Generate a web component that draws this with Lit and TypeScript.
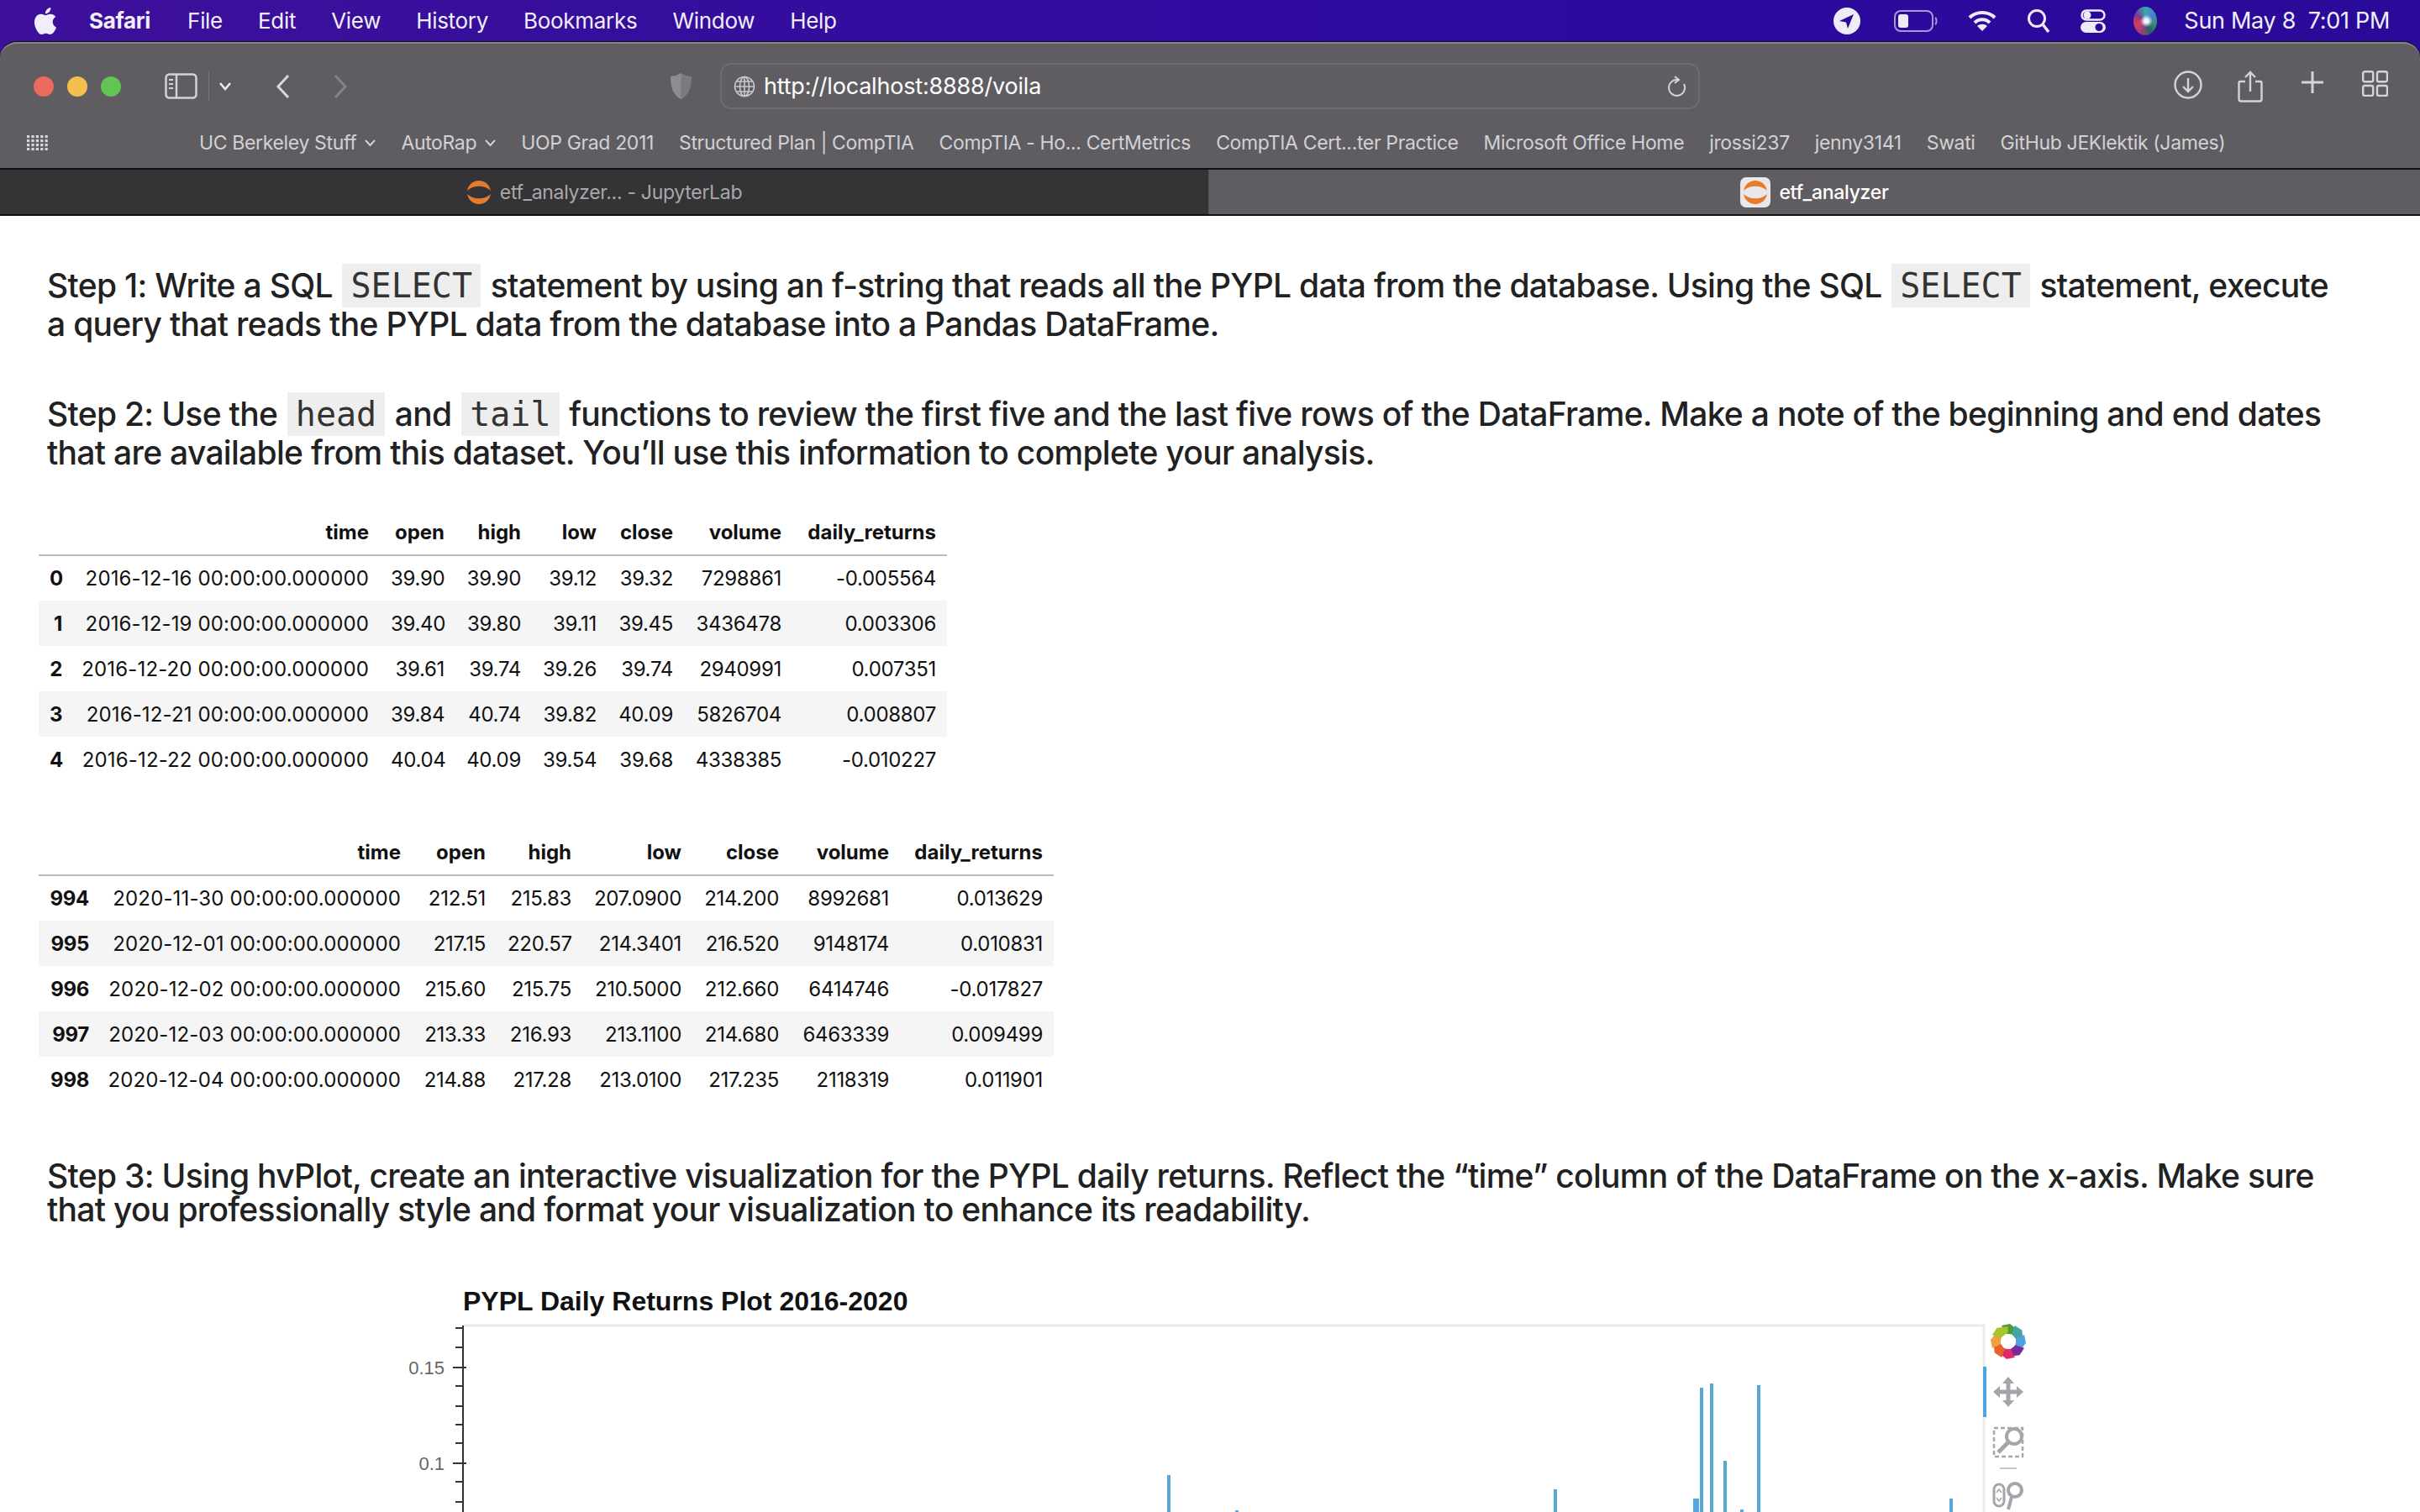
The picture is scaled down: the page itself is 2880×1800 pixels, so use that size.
import { LitElement, html, css, svg } from "lit";
import { customElement } from "lit/decorators.js";

const T1 = {
  cols: [41, 365, 90, 91, 90, 91, 129, 184],
  head: ["", "time", "open", "high", "low", "close", "volume", "daily_returns"],
  rows: [
    ["0", "2016-12-16 00:00:00.000000", "39.90", "39.90", "39.12", "39.32", "7298861", "-0.005564"],
    ["1", "2016-12-19 00:00:00.000000", "39.40", "39.80", "39.11", "39.45", "3436478", "0.003306"],
    ["2", "2016-12-20 00:00:00.000000", "39.61", "39.74", "39.26", "39.74", "2940991", "0.007351"],
    ["3", "2016-12-21 00:00:00.000000", "39.84", "40.74", "39.82", "40.09", "5826704", "0.008807"],
    ["4", "2016-12-22 00:00:00.000000", "40.04", "40.09", "39.54", "39.68", "4338385", "-0.010227"],
  ],
};
const T2 = {
  cols: [73, 371, 101, 102, 131, 116, 131, 183],
  head: T1.head,
  rows: [
    ["994", "2020-11-30 00:00:00.000000", "212.51", "215.83", "207.0900", "214.200", "8992681", "0.013629"],
    ["995", "2020-12-01 00:00:00.000000", "217.15", "220.57", "214.3401", "216.520", "9148174", "0.010831"],
    ["996", "2020-12-02 00:00:00.000000", "215.60", "215.75", "210.5000", "212.660", "6414746", "-0.017827"],
    ["997", "2020-12-03 00:00:00.000000", "213.33", "216.93", "213.1100", "214.680", "6463339", "0.009499"],
    ["998", "2020-12-04 00:00:00.000000", "214.88", "217.28", "213.0100", "217.235", "2118319", "0.011901"],
  ],
};
const MENU = ["File", "Edit", "View", "History", "Bookmarks", "Window", "Help"];
const BOOKMARKS: [string, boolean][] = [
  ["UC Berkeley Stuff", true], ["AutoRap", true], ["UOP Grad 2011", false],
  ["Structured Plan | CompTIA", false], ["CompTIA - Ho... CertMetrics", false],
  ["CompTIA Cert...ter Practice", false], ["Microsoft Office Home", false],
  ["jrossi237", false], ["jenny3141", false], ["Swati", false], ["GitHub JEKlektik (James)", false],
];
const BARS = [[1391, 1755], [1472, 1797], [1851, 1772], [2017, 1783], [2020, 1783], [2025, 1651], [2037, 1646], [2053, 1738], [2073, 1796], [2093, 1648], [2322, 1783]];
const MINOR = [1580, 1603, 1649, 1673, 1695, 1717, 1763, 1787];
const PETALS = ["#4f9a3f", "#45a5a5", "#4aa3df", "#7a2b9a", "#e02a6f", "#e8622a", "#f0a040", "#a6c52f"];

const jupyter = svg`<path d="M1 16C4 0 26 0 29 16C22 9 8 9 1 16Z" fill="#e87a2c"/><path d="M1 20C4 36 26 36 29 20C22 27 8 27 1 20Z" fill="#e87a2c"/>`;

@customElement("app-root")
export class AppRoot extends LitElement {
  static styles = css`
    :host { display: block; }
    .screen { width: 2880px; height: 1800px; overflow: hidden; background: #fff; display: flex; flex-direction: column; font-family: Inter, "Liberation Sans", sans-serif; }
    .top { background: linear-gradient(90deg, #3d109a 0%, #330d9e 35%, #2d0aa0 60%, #2a0a98 100%); }
    .menubar { height: 49px; display: flex; align-items: center; color: #f0eef8; font-size: 26px; letter-spacing: -0.3px; }
    .apple { margin-left: 38px; width: 32px; height: 36px; }
    .app { margin-left: 36px; font-weight: 700; }
    .menus { display: flex; gap: 42px; margin-left: 44px; }
    .status { margin-left: auto; display: flex; align-items: center; padding-right: 36px; }
    .status svg { display: block; }
    .st-loc { margin-right: 40px; }
    .st-bat { margin-right: 36px; }
    .st-wifi { margin-right: 36px; }
    .st-search { margin-right: 36px; }
    .st-cc { margin-right: 33px; }
    .siri { width: 28px; height: 34px; border-radius: 50%; margin-right: 32px; background: radial-gradient(circle at 55% 50%, #f2f4ff 0 10%, transparent 32%), conic-gradient(#3aa7b0, #4b7fd0, #3c8f7a, #2b5f6a, #b03a7a, #d0405a, #7a3a8a, #3aa7b0); }
    .clock { font-size: 27px; white-space: pre; }
    .window { border-radius: 20px 20px 0 0; overflow: hidden; background: #5f5d62; border-top: 1px solid #111; box-shadow: inset 0 2px 0 #87858a; }
    .row1 { height: 105px; display: flex; align-items: center; }
    .lights { display: flex; gap: 16px; margin-left: 40px; }
    .light { width: 24px; height: 24px; border-radius: 50%; }
    .red { background: #ed6a5e; }
    .yellow { background: #f5bf4f; }
    .green { background: #61c554; }
    .sidebar { margin-left: 52px; }
    .divider { width: 1px; height: 36px; background: #77757a; margin-left: 13px; }
    .chev { margin-left: 12px; }
    .back { margin-left: 53px; }
    .fwd { margin-left: 52px; }
    .shield { margin-left: 383px; }
    .url { margin-left: 33px; width: 1166px; height: 55px; box-sizing: border-box; border: 2px solid #6e6c71; border-radius: 13px; display: flex; align-items: center; padding: 0 14px; color: #fff; font-size: 27px; letter-spacing: -0.2px; }
    .url span { margin-left: 10px; }
    .reload { margin-left: auto; }
    .tools { margin-left: auto; display: flex; padding-right: 17px; }
    .tool { width: 74px; display: flex; justify-content: center; }
    .row2 { height: 30px; padding-bottom: 15px; display: flex; align-items: center; color: #d2d1d3; font-size: 23px; letter-spacing: -0.35px; }
    .grid-ic { margin-left: 32px; }
    .marks { display: flex; gap: 30px; margin-left: 180px; }
    .mark { display: flex; align-items: center; gap: 10px; white-space: nowrap; }
    .tabs { display: flex; height: 53px; border-top: 2px solid #111; border-bottom: 2px solid #111; }
    .tab { display: flex; align-items: center; justify-content: center; gap: 10px; font-size: 23px; letter-spacing: -0.3px; height: 53px; }
    .tab-off { width: 1438px; background: #343335; color: #a9a8aa; border-right: 1px solid #57565a; }
    .tab-on { flex: 1; color: #fff; font-weight: 500; background: #5f5d62; }
    .fav { width: 36px; height: 36px; background: #e8e8e8; border-radius: 7px; display: flex; }
    .main { padding: 60px 0 0 46px; color: #212121; }
    p { margin: 0 0 0 10px; font-size: 39px; font-weight: 500; line-height: 46px; letter-spacing: -0.7px; white-space: nowrap; }
    p + p { margin-top: 61px; }
    p.tight { line-height: 40px; margin-top: 68px; }
    code { font-family: "DejaVu Sans Mono", monospace; font-size: 40px; font-weight: 400; letter-spacing: 0; background: #eee; padding: 3px 10px; margin: 0 2px; color: #333; }
    table { border-collapse: collapse; table-layout: fixed; font-size: 24px; letter-spacing: -0.3px; color: #111; }
    .t1 { margin-top: 44px; }
    .t2 { margin-top: 56px; }
    th, td { padding: 0 13px; height: 54px; text-align: right; white-space: nowrap; box-sizing: border-box; font-weight: 400; }
    th.b, thead th { font-weight: 700; }
    thead th { border-bottom: 2px solid #bbb; height: 55px; vertical-align: middle; letter-spacing: 0; }
    td.date { letter-spacing: 0.15px; padding-left: 0; }
    tbody tr:nth-child(even) { background: #f5f5f5; }
    .chart { display: block; margin-top: 41px; flex: none; }
    .title { font: 700 32px "Liberation Sans", sans-serif; fill: #111; }
    .tick { font: 22px "Liberation Sans", sans-serif; fill: #666; }
  `;

  private table(t: typeof T1, cls: string) {
    const width = t.cols.reduce((a, b) => a + b, 0);
    return html`<table class=${cls} style="width:${width}px">
      <colgroup>${t.cols.map((w) => html`<col style="width:${w}px" />`)}</colgroup>
      <thead><tr>${t.head.map((h) => html`<th>${h}</th>`)}</tr></thead>
      <tbody>${t.rows.map((r) => html`<tr>${r.map((c, i) => (i === 0 ? html`<th class="b">${c}</th>` : html`<td class=${i === 1 ? "date" : ""}>${c}</td>`))}</tr>`)}</tbody>
    </table>`;
  }

  private chart() {
    const y = (v: number) => v - 1500;
    return html`<svg class="chart" width="2880" height="300" viewBox="0 0 2880 300">
      <text class="title" x="551" y="59">PYPL Daily Returns Plot 2016-2020</text>
      <path d="M551 77H2361V300" fill="none" stroke="#eaeaea" stroke-width="3"/>
      <path d="M551 77V300" stroke="#333" stroke-width="2"/>
      ${MINOR.map((m) => svg`<path d="M542 ${y(m)}H552" stroke="#333" stroke-width="2"/>`)}
      <path d="M539 127H555M539 241H555" stroke="#333" stroke-width="2"/>
      <text class="tick" x="529" y="135" text-anchor="end">0.15</text>
      <text class="tick" x="529" y="249" text-anchor="end">0.1</text>
      ${BARS.map(([x, t]) => svg`<rect x=${x - 2} y=${y(t)} width="4" height=${300 - y(t)} fill="#57a7dd"/>`)}
      <rect x="2360" y="126" width="4" height="60" fill="#4ea5e0"/>
      <g transform="translate(2390 96)">
        ${PETALS.map((c, i) => svg`<path transform="rotate(${i * 45})" d="M-8 -19L2 -21L12 -13L8 -8L-3 -9Z" fill=${c}/>`)}
        <circle r="9" fill="#fff"/>
      </g>
      <g transform="translate(2390 156)" fill="#a2a6aa">
        <path d="M0 -18L7 -10H2.5V-2.5H10V-7L18 0L10 7V2.5H2.5V10H7L0 18L-7 10H-2.5V2.5H-10V7L-18 0L-10 -7V-2.5H-2.5V-10H-7Z"/>
      </g>
      <g fill="none" stroke="#a2a6aa">
        <rect x="2373" y="199" width="34" height="34" stroke-width="2.5" stroke-dasharray="5 3"/>
        <circle cx="2397" cy="209" r="9" stroke-width="4" fill="#fff"/>
        <path d="M2390 216L2378 228" stroke-width="5"/>
        <path d="M2380 247H2400" stroke="#c8c8c8" stroke-width="2"/>
        <rect x="2373" y="266" width="12" height="26" rx="6" stroke-width="3"/>
        <path d="M2376 276L2379 272L2382 276M2376 282L2379 286L2382 282" stroke-width="1.5"/>
        <circle cx="2398" cy="273" r="8" stroke-width="4"/>
        <path d="M2394 281L2390 296" stroke-width="4"/>
      </g>
    </svg>`;
  }

  render() {
    return html`<div class="screen">
      <div class="top">
        <div class="menubar">
          <svg class="apple" viewBox="0 0 24 24" fill="#f0eef8"><path d="M12.152 6.896c-.948 0-2.415-1.078-3.96-1.04-2.04.027-3.91 1.183-4.961 3.014-2.117 3.675-.546 9.103 1.519 12.09 1.013 1.454 2.208 3.09 3.792 3.039 1.52-.065 2.09-.987 3.935-.987 1.831 0 2.35.987 3.96.948 1.637-.026 2.676-1.48 3.676-2.948 1.156-1.688 1.636-3.325 1.662-3.415-.039-.013-3.182-1.221-3.22-4.857-.026-3.04 2.48-4.494 2.597-4.559-1.429-2.09-3.623-2.324-4.39-2.376-2-.156-3.675 1.09-4.61 1.09zM15.53 3.83c.843-1.012 1.4-2.427 1.245-3.83-1.207.052-2.662.805-3.532 1.818-.78.896-1.454 2.338-1.273 3.714 1.338.104 2.715-.688 3.559-1.701"/></svg>
          <span class="app">Safari</span>
          <div class="menus">${MENU.map((m) => html`<span>${m}</span>`)}</div>
          <div class="status">
            <svg class="st-loc" width="32" height="32" viewBox="0 0 32 32"><circle cx="16" cy="16" r="16" fill="#ecebf6"/><path d="M24 8L7 16L15 17.5L17 25Z" fill="#2b0a98"/></svg>
            <svg class="st-bat" width="52" height="26" viewBox="0 0 52 26" fill="none"><rect x="1" y="1" width="45" height="24" rx="7" stroke="#a49ad8" stroke-width="2"/><rect x="5" y="5" width="12" height="16" rx="3" fill="#ecebf6"/><path d="M49 9C51 10 51 16 49 17" stroke="#a49ad8" stroke-width="2"/></svg>
            <svg class="st-wifi" width="34" height="26" viewBox="0 0 34 26" fill="none" stroke="#ecebf6" stroke-width="4"><path d="M2 9C10 1 24 1 32 9"/><path d="M8 15C13 10 21 10 26 15"/><path d="M17 25L11 19C14 16 20 16 23 19Z" fill="#ecebf6" stroke="none"/></svg>
            <svg class="st-search" width="28" height="30" viewBox="0 0 28 30" fill="none" stroke="#ecebf6" stroke-width="3"><circle cx="12" cy="12" r="9.5"/><path d="M19 19L26 28" stroke-width="3.5"/></svg>
            <svg class="st-cc" width="30" height="28" viewBox="0 0 30 28"><rect x="1.5" y="1.5" width="27" height="11" rx="5.5" fill="none" stroke="#ecebf6" stroke-width="2.5"/><circle cx="8" cy="7" r="4.5" fill="#ecebf6"/><rect y="15" width="30" height="13" rx="6.5" fill="#ecebf6"/><circle cx="22" cy="21.5" r="4.5" fill="#2b0a98"/></svg>
            <div class="siri"></div>
            <span class="clock">Sun May 8  7:01 PM</span>
          </div>
        </div>
        <div class="window">
          <div class="row1">
            <div class="lights"><div class="light red"></div><div class="light yellow"></div><div class="light green"></div></div>
            <svg class="sidebar" width="39" height="31" viewBox="0 0 39 31" fill="none" stroke="#d4d3d5" stroke-width="2.5"><rect x="1.5" y="1.5" width="36" height="28" rx="4"/><path d="M14 2V29"/><path d="M5 8H10M5 13H10M5 18H10" stroke-width="2"/></svg>
            <div class="divider"></div>
            <svg class="chev" width="14" height="10" viewBox="0 0 14 10" fill="none" stroke="#eee" stroke-width="2.5"><path d="M1 1L7 8L13 1"/></svg>
            <svg class="back" width="17" height="28" viewBox="0 0 17 28" fill="none" stroke="#d8d7d9" stroke-width="3"><path d="M15 1L3 14L15 27"/></svg>
            <svg class="fwd" width="17" height="28" viewBox="0 0 17 28" fill="none" stroke="#858387" stroke-width="3"><path d="M2 1L14 14L2 27"/></svg>
            <svg class="shield" width="27" height="33" viewBox="0 0 27 33"><path d="M13.5 1C18 4 22 4.500 26 5C26 18 23 27 13.500 32C4 27 1 18 1 5C5 4.500 9 4 13.500 1Z" fill="#7c7a7e"/><path d="M13.500 1C9 4 5 4.500 1 5C1 18 4 27 13.500 32Z" fill="#8e8c90"/></svg>
            <div class="url">
              <svg width="26" height="26" viewBox="0 0 26 26" fill="none" stroke="#c9c8ca" stroke-width="1.600"><circle cx="13" cy="13" r="11.500"/><ellipse cx="13" cy="13" rx="5.500" ry="11.500"/><path d="M13 1.500V24.500M1.500 13H24.500M3.500 7H22.500M3.500 19H22.500"/></svg>
              <span>http://localhost:8888/voila</span>
              <svg class="reload" width="24" height="26" viewBox="0 0 24 26" fill="none" stroke="#d4d3d5" stroke-width="2"><path d="M14 5A9.500 9.500 0 1 0 21 10"/><path d="M10 1L15 5L10 9"/></svg>
            </div>
            <div class="tools">
              <div class="tool"><svg width="34" height="34" viewBox="0 0 34 34" fill="none" stroke="#d4d3d5" stroke-width="2.400"><circle cx="17" cy="17" r="15.500"/><path d="M17 9V25M11 19L17 25L23 19"/></svg></div>
              <div class="tool"><svg width="30" height="38" viewBox="0 0 30 38" fill="none" stroke="#d4d3d5" stroke-width="2.400"><path d="M9 13H3C2 13 1.500 14 1.500 15V34C1.500 35.500 2.500 36.500 4 36.500H26C27.500 36.500 28.500 35.500 28.500 34V15C28.500 14 28 13 27 13H21"/><path d="M15 25V2M9 8L15 2L21 8"/></svg></div>
              <div class="tool"><svg width="28" height="28" viewBox="0 0 28 28" stroke="#d4d3d5" stroke-width="3"><path d="M14 1V27M1 14H27"/></svg></div>
              <div class="tool"><svg width="31" height="31" viewBox="0 0 31 31" fill="none" stroke="#d4d3d5" stroke-width="2.400"><rect x="1.200" y="1.200" width="12" height="12" rx="2"/><rect x="18" y="1.200" width="12" height="12" rx="2"/><rect x="1.200" y="18" width="12" height="12" rx="2"/><rect x="18" y="18" width="12" height="12" rx="2"/></svg></div>
            </div>
          </div>
          <div class="row2">
            <svg class="grid-ic" width="25" height="18" viewBox="0 0 25 18" fill="#d8d7d9">
              ${[0, 1, 2, 3].flatMap((r) => [0, 1, 2, 3, 4].map((c) => svg`<rect x=${c * 5.4} y=${r * 5} width="3.200" height="3.200"/>`))}
            </svg>
            <div class="marks">
              ${BOOKMARKS.map(([t, c]) => html`<div class="mark">${t}${c ? html`<svg width="13" height="9" viewBox="0 0 13 9" fill="none" stroke="#d2d1d3" stroke-width="2"><path d="M1 1L6.500 7L12 1"/></svg>` : ""}</div>`)}
            </div>
          </div>
          <div class="tabs">
            <div class="tab tab-off"><svg width="30" height="36" viewBox="0 0 30 36">${jupyter}</svg><span>etf_analyzer... - JupyterLab</span></div>
            <div class="tab tab-on"><div class="fav"><svg width="36" height="36" viewBox="-3 0 36 36">${jupyter}</svg></div><span>etf_analyzer</span></div>
          </div>
        </div>
      </div>
      <div class="main">
        <p>Step 1: Write a SQL <code>SELECT</code> statement by using an f-string that reads all the PYPL data from the database. Using the SQL <code>SELECT</code> statement, execute<br />a query that reads the PYPL data from the database into a Pandas DataFrame.</p>
        <p>Step 2: Use the <code>head</code> and <code>tail</code> functions to review the first five and the last five rows of the DataFrame. Make a note of the beginning and end dates<br />that are available from this dataset. You’ll use this information to complete your analysis.</p>
        ${this.table(T1, "t1")}
        ${this.table(T2, "t2")}
        <p class="tight">Step 3: Using hvPlot, create an interactive visualization for the PYPL daily returns. Reflect the “time” column of the DataFrame on the x-axis. Make sure<br />that you professionally style and format your visualization to enhance its readability.</p>
      </div>
      <div class="plot">${this.chart()}</div>
    </div>`;
  }
}
